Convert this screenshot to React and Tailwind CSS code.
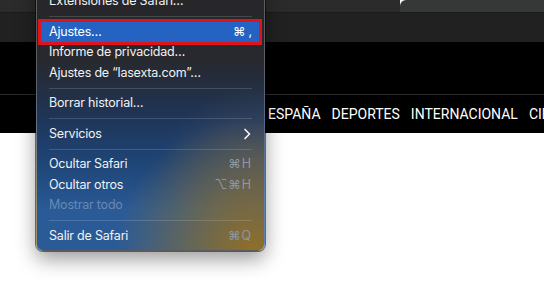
import React from "react";

const font = { fontFamily: "Inter, 'Noto Sans', 'DejaVu Sans', sans-serif" };

function Row({ label, shortcut, disabled, chevron }) {
  return (
    <div className="relative flex h-[20.5px] items-center justify-between pl-[12px] pr-[12px]">
      <span className={disabled ? "text-[#6a89b3]" : "text-[#f2f2f2]"}>{label}</span>
      {shortcut && <span className="text-[#8e97a6] tracking-[1px]">{shortcut}</span>}
      {chevron && (
        <svg width="8" height="12" viewBox="0 0 8 12" className="mr-[1px]">
          <path d="M2 1.5 L6.5 6 L2 10.5" fill="none" stroke="#f2f2f2" strokeWidth="1.7" strokeLinecap="round" strokeLinejoin="round" />
        </svg>
      )}
    </div>
  );
}

function Sep() {
  return (
    <div className="flex h-[10px] items-center px-[12px]">
      <div className="h-px w-full bg-white/15" />
    </div>
  );
}

export default function App() {
  return (
    <div className="relative h-[306px] w-[544px] overflow-hidden bg-white" style={font}>
      {/* Browser chrome */}
      <div className="flex h-[12px]">
        <div className="w-[400px] bg-[#2b2b2b]" />
        <div className="flex-1 rounded-tl-[6px] bg-[#353837]" />
      </div>
      <div className="h-[30px] border-t border-[#1a1a1a] bg-[#212121]" />
      <div className="h-[52px] bg-black" />
      <div className="h-px bg-[#2c2c2c]" />
      <div className="flex h-[38px] items-center gap-[11px] overflow-hidden bg-black pl-[268px] whitespace-nowrap text-[14px] text-white" style={{ fontFamily: "Roboto, 'Liberation Sans', sans-serif" }}>
        <span>ESPAÑA</span>
        <span>DEPORTES</span>
        <span>INTERNACIONAL</span>
        <span>CIE</span>
      </div>

      {/* Menu overlay */}
      <div className="absolute left-[36px] top-[-15px] w-[229px] rounded-b-[7px] border border-white/25 bg-[radial-gradient(ellipse_60%_50%_at_95%_100%,rgba(150,112,34,0.95)_0%,rgba(150,112,34,0.55)_45%,rgba(150,112,34,0)_100%),radial-gradient(ellipse_45%_30%_at_100%_68%,rgba(95,95,100,0.55)_0%,rgba(95,95,100,0)_100%),linear-gradient(180deg,#262629_0%,#27292e_28%,#1f3558_50%,#1f4678_68%,#2a5a97_85%,#2b5b96_100%)] pt-[5px] pb-[4px] text-[12.5px] leading-none tracking-[-0.2px] shadow-[0_0_0_1px_rgba(0,0,0,0.5),0_8px_20px_rgba(0,0,0,0.4)]">
        <Row label="Extensiones de Safari…" />
        <Sep />
        <div className="relative flex h-[20.5px] items-center justify-between pl-[12px] pr-[12px]">
          <div className="absolute -top-[3px] -bottom-[3px] left-[1px] right-[2px] border-[3.5px] border-[#e0121c] bg-[#2563c2]" />
          <span className="relative text-white">Ajustes…</span>
          <span className="relative text-white">⌘ ,</span>
        </div>
        <Row label="Informe de privacidad…" />
        <Row label="Ajustes de “lasexta.com”…" />
        <Sep />
        <Row label="Borrar historial…" />
        <Sep />
        <Row label="Servicios" chevron />
        <Sep />
        <Row label="Ocultar Safari" shortcut="⌘H" />
        <Row label="Ocultar otros" shortcut="⌥⌘H" />
        <Row label="Mostrar todo" disabled />
        <Sep />
        <Row label="Salir de Safari" shortcut="⌘Q" />
      </div>
    </div>
  );
}
